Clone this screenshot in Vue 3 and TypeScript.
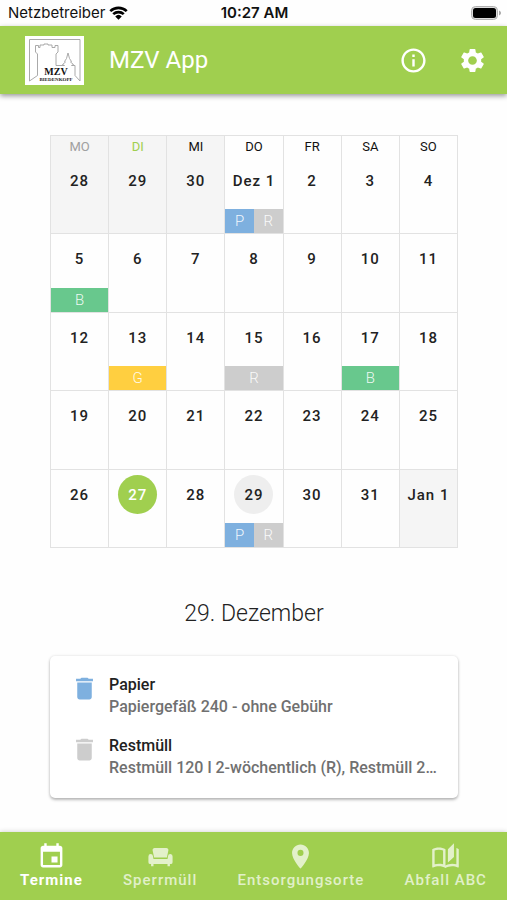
<script setup lang="ts">
import { ref } from 'vue'

type Waste = 'P' | 'R' | 'B' | 'G'
interface Day {
  label: string
  key: string
  outside?: boolean
  today?: boolean
  pickups?: Waste[]
}

const pickups: Record<number, Waste[]> = {
  1: ['P', 'R'],
  5: ['B'],
  13: ['G'],
  15: ['R'],
  17: ['B'],
  29: ['P', 'R'],
}

const days: Day[] = [
  ...[28, 29, 30].map((n) => ({ label: String(n), key: `nov-${n}`, outside: true })),
  ...Array.from({ length: 31 }, (_, i) => ({
    label: i === 0 ? 'Dez 1' : String(i + 1),
    key: `dez-${i + 1}`,
    today: i + 1 === 27,
    pickups: pickups[i + 1],
  })),
  { label: 'Jan 1', key: 'jan-1', outside: true },
]
const weeks: Day[][] = Array.from({ length: 5 }, (_, w) => days.slice(w * 7, w * 7 + 7))

const weekdays = [
  { name: 'MO', tone: 'muted' },
  { name: 'DI', tone: 'current' },
  { name: 'MI', tone: 'shaded' },
  { name: 'DO', tone: '' },
  { name: 'FR', tone: '' },
  { name: 'SA', tone: '' },
  { name: 'SO', tone: '' },
]

const selected = ref('dez-29')

const entries = [
  { kind: 'P', title: 'Papier', detail: 'Papiergefäß 240 - ohne Gebühr' },
  { kind: 'R', title: 'Restmüll', detail: 'Restmüll 120 l 2-wöchentlich (R), Restmüll 2…' },
]

const activeTab = ref('Termine')
const tabs = [
  {
    name: 'Termine',
    path: 'M17 12h-5v5h5v-5zM16 1v2H8V1H6v2H5c-1.11 0-1.99.9-1.99 2L3 19c0 1.1.89 2 2 2h14c1.1 0 2-.9 2-2V5c0-1.1-.9-2-2-2h-1V1h-2zm3 18H5V8h14v11z',
  },
  {
    name: 'Sperrmüll',
    path: 'M7.200 5h9.600a1.700 1.700 0 0 1 1.700 2.100L17.300 12.800H6.700L5.500 7.100A1.700 1.700 0 0 1 7.200 5zM3.900 10a1.900 1.900 0 0 1 1.900 1.700l.4 2.300h11.600l.4-2.300a1.900 1.900 0 0 1 3.800.2V16.700a1.600 1.600 0 0 1-1.600 1.600h-.6V20h-2v-1.700H6.200V20h-2v-1.700h-.6A1.600 1.600 0 0 1 2 16.700V11.900a1.900 1.900 0 0 1 1.900-1.900z',
  },
  {
    name: 'Entsorgungsorte',
    path: 'M12 2C8.130 2 5 5.130 5 9c0 5.250 7 13 7 13s7-7.750 7-13c0-3.870-3.130-7-7-7zm0 9.500a2.500 2.500 0 0 1 0-5 2.500 2.500 0 0 1 0 5z',
  },
  {
    name: 'Abfall ABC',
    path: 'M19 1L14 6V17L19 12.5V1M21 5V18.5C19.9 18.15 18.7 18 17.5 18C15.8 18 13.35 18.65 12 19.5V6C10.55 4.9 8.45 4.5 6.5 4.5C4.55 4.5 2.45 4.9 1 6V20.65C1 20.9 1.25 21.15 1.5 21.15C1.6 21.15 1.65 21.1 1.75 21.1C3.1 20.45 5.05 20 6.5 20C8.45 20 10.55 20.4 12 21.5C13.35 20.65 15.8 20 17.5 20C19.15 20 20.85 20.3 22.25 21.05C22.35 21.1 22.4 21.1 22.5 21.1C22.75 21.1 23 20.85 23 20.6V6C22.4 5.55 21.75 5.25 21 5M10 18.41C8.75 18.09 7.5 18 6.5 18C5.44 18 4.18 18.19 3 18.5V7.13C3.91 6.73 5.14 6.5 6.5 6.5C7.86 6.5 9.09 6.73 10 7.13V18.41Z',
  },
]
</script>

<template>
  <div class="app">
    <div class="status">
      <div class="carrier">
        <span>Netzbetreiber</span>
        <svg class="wifi" viewBox="0 0 18 13" aria-hidden="true">
          <path d="M1.200 4.700a11.400 11.400 0 0 1 15.600 0M4 7.600a7.300 7.300 0 0 1 10 0" />
          <path class="wifi-dot" d="M9 12.800 5.900 9.700a4.500 4.500 0 0 1 6.200 0z" />
        </svg>
      </div>
      <div class="time">10:27 AM</div>
      <svg class="battery" viewBox="0 0 30 14" aria-hidden="true">
        <rect x="0.500" y="0.500" width="26" height="13" rx="4" fill="#ddd" stroke="#b0b0b0" />
        <rect x="2" y="2" width="23" height="10" rx="2.500" fill="#000" />
        <path d="M28 4.500c1.200.4 2 1.300 2 2.500s-.8 2.100-2 2.500z" fill="#a9a9a9" />
      </svg>
    </div>

    <header class="toolbar">
      <svg class="logo" viewBox="0 0 59 49" role="img" aria-label="MZV Biedenkopf">
        <rect width="59" height="49" fill="#fff" />
        <path
          d="M4.500 45V3.500H55V45L50 39.500V29.500H46.500l2-1-3-2.500 1-.5-2-3-1.500-5.500-1.500 5.500-2 3 1 .5-3 2.500 2 1H31V18l2-2V9.500h-3v2h-3v-2.500h-4V8h-4v1h-4v2.500h-1.500v-2h-3V16l2 2v21.500z"
          fill="none"
          stroke="#a0a0a0"
          stroke-width="0.900"
        />
        <text class="logo-name" x="31" y="39" text-anchor="middle">MZV</text>
        <text class="logo-place" x="31" y="45" text-anchor="middle">BIEDENKOPF</text>
      </svg>
      <h1>MZV App</h1>
      <button type="button" class="tool" aria-label="Info">
        <svg class="icon" viewBox="0 0 24 24">
          <path
            d="M11 7h2v2h-2zm0 4h2v6h-2zm1-9C6.480 2 2 6.480 2 12s4.480 10 10 10 10-4.480 10-10S17.520 2 12 2zm0 18c-4.410 0-8-3.590-8-8s3.590-8 8-8 8 3.590 8 8-3.590 8-8 8z"
          />
        </svg>
      </button>
      <button type="button" class="tool" aria-label="Einstellungen">
        <svg class="icon" viewBox="0 0 24 24">
          <path
            d="M19.140 12.940c.04-.3.06-.61.06-.94 0-.32-.02-.64-.07-.94l2.030-1.580c.18-.14.23-.41.12-.61l-1.920-3.320c-.12-.22-.37-.29-.59-.22l-2.390.96c-.5-.38-1.030-.7-1.620-.94l-.36-2.540c-.04-.24-.24-.41-.48-.41h-3.840c-.24 0-.43.17-.47.41l-.36 2.540c-.59.24-1.130.57-1.620.94l-2.390-.96c-.22-.08-.47 0-.59.22L2.740 8.870c-.12.21-.08.47.12.61l2.030 1.580c-.05.3-.09.63-.09.94s.02.64.07.94l-2.030 1.580c-.18.14-.23.41-.12.61l1.920 3.320c.12.22.37.29.59.22l2.390-.96c.5.38 1.030.7 1.620.94l.36 2.540c.05.24.24.41.48.41h3.840c.24 0 .44-.17.47-.41l.36-2.540c.59-.24 1.130-.56 1.620-.94l2.390.96c.22.08.47 0 .59-.22l1.920-3.320c.12-.22.07-.47-.12-.61l-2.010-1.580zM12 15.600c-1.980 0-3.600-1.620-3.600-3.600s1.620-3.600 3.600-3.600 3.600 1.620 3.600 3.600-1.620 3.600-3.600 3.600z"
          />
        </svg>
      </button>
    </header>

    <main>
      <table class="calendar">
        <thead>
          <tr>
            <th v-for="day in weekdays" :key="day.name" scope="col" :class="day.tone">{{ day.name }}</th>
          </tr>
        </thead>
        <tbody>
          <tr v-for="(week, w) in weeks" :key="w">
            <td v-for="day in week" :key="day.key" :class="{ outside: day.outside }">
              <div class="cell">
                <button
                  type="button"
                  class="day"
                  :class="{ today: day.today, selected: selected === day.key }"
                  @click="selected = day.key"
                >
                  {{ day.label }}
                </button>
                <div v-if="day.pickups" class="bars">
                  <span v-for="kind in day.pickups" :key="kind" class="bar" :class="`bar-${kind}`">{{ kind }}</span>
                </div>
              </div>
            </td>
          </tr>
        </tbody>
      </table>

      <h2>29. Dezember</h2>

      <ul class="card">
        <li v-for="entry in entries" :key="entry.title">
          <svg class="icon" :class="`bin-${entry.kind}`" viewBox="0 0 24 24" aria-hidden="true">
            <path d="M6 19c0 1.100.9 2 2 2h8c1.100 0 2-.9 2-2V7H6v12zM19 4h-3.500l-1-1h-5l-1 1H5v2h14V4z" />
          </svg>
          <div class="entry">
            <div class="entry-title">{{ entry.title }}</div>
            <div class="entry-detail">{{ entry.detail }}</div>
          </div>
        </li>
      </ul>
    </main>

    <nav class="tabs">
      <button
        v-for="tab in tabs"
        :key="tab.name"
        type="button"
        class="tab"
        :class="{ active: activeTab === tab.name }"
        @click="activeTab = tab.name"
      >
        <svg class="icon" viewBox="0 0 24 24" aria-hidden="true"><path :d="tab.path" /></svg>
        <span>{{ tab.name }}</span>
      </button>
    </nav>
  </div>
</template>

<style>
body {
  background: #fefefe;
}
</style>

<style scoped>
.app {
  display: flex;
  flex-direction: column;
  min-height: 100vh;
  font-family: Roboto, 'Liberation Sans', sans-serif;
  color: #222;
}
button {
  padding: 0;
  border: 0;
  background: none;
  color: inherit;
  font: inherit;
  cursor: pointer;
}
.icon {
  display: block;
  flex: none;
  width: 29px;
  height: 29px;
  fill: currentColor;
}
.status {
  display: grid;
  grid-template-columns: 1fr auto 1fr;
  align-items: center;
  height: 26px;
  padding: 0 6px 0 8px;
  font-family: Inter, 'Liberation Sans', sans-serif;
  font-size: 15px;
  line-height: 26px;
  color: #111;
}
.carrier {
  display: flex;
  align-items: center;
  gap: 4px;
}
.wifi {
  width: 19px;
  height: 14px;
  fill: none;
  stroke: #000;
  stroke-width: 2.5;
}
.wifi .wifi-dot {
  fill: #000;
  stroke: none;
}
.time {
  font-weight: 600;
}
.battery {
  justify-self: end;
  width: 30px;
  height: 14px;
}
.toolbar {
  display: flex;
  align-items: center;
  height: 68px;
  padding: 0 20px 0 25px;
  background: #a0cf4f;
  color: #fff;
  box-shadow: 0 2px 5px rgba(0, 0, 0, 0.4);
}
.logo {
  width: 59px;
  height: 49px;
}
.logo-name {
  font: bold 10px 'Liberation Serif', serif;
  fill: #111;
}
.logo-place {
  font: bold 5px 'Liberation Serif', serif;
  fill: #222;
}
h1 {
  flex: 1;
  margin: 0 0 0 25px;
  font-size: 24px;
  font-weight: 400;
}
.tool {
  margin-left: 30px;
}
main {
  flex: 1;
  padding: 41px 49px 34px 50px;
}
.calendar {
  width: 100%;
  table-layout: fixed;
  border-collapse: separate;
  border-spacing: 0;
  border: solid #e2e2e2;
  border-width: 1px 0 0 1px;
}
th {
  padding: 2px 0 0;
  border-right: 1px solid #e2e2e2;
  font-size: 13px;
  font-weight: 400;
  line-height: 18px;
  color: #111;
}
th.muted,
th.current,
th.shaded,
td.outside {
  background: #f5f5f5;
}
th.muted {
  color: #a0a0a0;
}
th.current {
  color: #a0cf4f;
}
td {
  padding: 0;
  border: solid #e2e2e2;
  border-width: 0 1px 1px 0;
}
.cell {
  display: flex;
  flex-direction: column;
  align-items: center;
  justify-content: space-between;
  box-sizing: border-box;
  height: 77px;
  padding-top: 5px;
}
tr:nth-child(even) .cell {
  height: 78px;
}
.day {
  min-width: 39px;
  height: 39px;
  border-radius: 20px;
  font-size: 15px;
  font-weight: 500;
  letter-spacing: 1px;
  white-space: nowrap;
}
.day.selected {
  background: #eee;
}
.day.today {
  background: #a0cf4f;
  color: #fff;
}
.bars {
  display: flex;
  align-self: stretch;
}
.bar {
  flex: 1;
  font-size: 15px;
  font-weight: 300;
  line-height: 24px;
  text-align: center;
  color: rgba(255, 255, 255, 0.9);
}
.bar-P {
  background: #7eb0df;
}
.bar-R {
  background: #cdcdcd;
}
.bar-B {
  background: #68c88d;
}
.bar-G {
  background: #ffcf40;
}
h2 {
  margin: 51px 0 27px;
  font-size: 23px;
  font-weight: 300;
  line-height: 30px;
  text-align: center;
}
.card {
  display: flex;
  flex-direction: column;
  gap: 17px;
  margin: 0;
  padding: 18px 20px 19px 20px;
  border-radius: 5px;
  background: #fff;
  box-shadow: 0 2px 3px rgba(0, 0, 0, 0.25), 0 0 3px rgba(0, 0, 0, 0.12);
  list-style: none;
}
.card li {
  display: flex;
  gap: 10px;
}
.bin-P {
  color: #7eb0df;
}
.bin-R {
  color: #cdcdcd;
}
.entry {
  min-width: 0;
  font-size: 16px;
  font-weight: 500;
  line-height: 22px;
}
.entry-detail {
  overflow: hidden;
  color: #707070;
  text-overflow: ellipsis;
  white-space: nowrap;
}
.tabs {
  display: flex;
  height: 69px;
  background: #a0cf4f;
  color: #fff;
  box-shadow: 0 0 5px rgba(0, 0, 0, 0.2);
}
.tab {
  display: flex;
  flex: 1 0 auto;
  flex-direction: column;
  align-items: center;
  padding: 10px 10px 0;
  color: rgba(255, 255, 255, 0.7);
  font-size: 15px;
  font-weight: 500;
  letter-spacing: 1px;
  line-height: 18px;
}
.tab.active {
  color: #fff;
  font-weight: 700;
}
</style>
